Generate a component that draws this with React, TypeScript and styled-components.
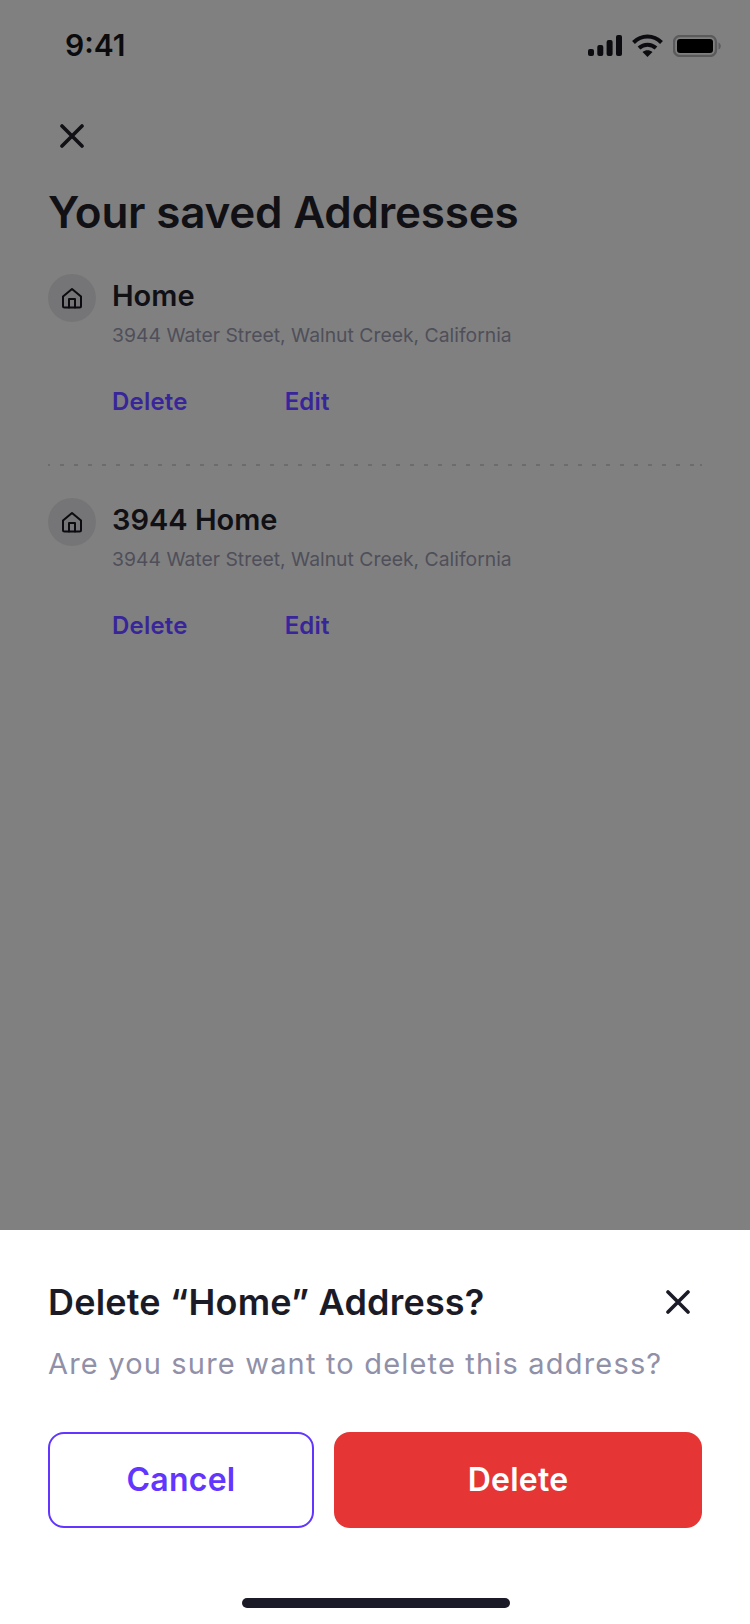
import React from "react";
import styled, { createGlobalStyle } from "styled-components";

const Global = createGlobalStyle`
  html, body { margin: 0; padding: 0; }
  body { font-family: "Inter", "Noto Sans", sans-serif; }
  * { box-sizing: border-box; }
`;

const Screen = styled.div`
  width: 750px;
  height: 1624px;
  display: flex;
  flex-direction: column;
  background: #808080;
  overflow: hidden;
`;

const Backdrop = styled.div`
  flex: 1;
  display: flex;
  flex-direction: column;
  min-height: 0;
`;

const StatusBar = styled.div`
  height: 90px;
  padding: 26px 28px 0 65px;
  display: flex;
  justify-content: space-between;
  align-items: flex-start;
`;

const Time = styled.span`
  font-family: "Inter", sans-serif;
  font-size: 30px;
  line-height: 38px;
  font-weight: 600;
  color: #0b0b0e;
`;

const StatusIcons = styled.div`
  display: flex;
  align-items: center;
  gap: 10px;
  margin-top: 8px;
`;

const Content = styled.div`
  padding: 22px 48px 0;
  display: flex;
  flex-direction: column;
`;

const CloseButton = styled.div`
  width: 48px;
  height: 48px;
  display: flex;
  align-items: center;
  justify-content: center;
  color: #101015;
`;

const Title = styled.h1`
  margin: 24px 0 0;
  font-size: 44px;
  line-height: 56px;
  font-weight: 600;
  letter-spacing: -0.22px;
  color: #101015;
`;

const AddressList = styled.div`
  margin-top: 34px;
  display: flex;
  flex-direction: column;
`;

const AddressItem = styled.div`
  display: grid;
  grid-template-columns: 48px 1fr;
  column-gap: 16px;
`;

const Divider = styled.div`
  height: 2px;
  margin: 47px 0 32px;
  background: repeating-linear-gradient(90deg, #6c6c6c 0 4px, transparent 4px 14px);
  background-position: -2px 0;
`;

const IconCircle = styled.div`
  width: 48px;
  height: 48px;
  border-radius: 50%;
  background: #757577;
  display: flex;
  align-items: center;
  justify-content: center;
  color: #0b0b10;
`;

const AddressName = styled.div`
  margin-top: 2px;
  font-size: 29px;
  line-height: 40px;
  font-weight: 600;
  color: #101015;
`;

const AddressLine = styled.div`
  margin-top: 6px;
  font-size: 19.35px;
  line-height: 26px;
  color: #4f4f5a;
`;

const Actions = styled.div`
  margin-top: 39px;
  display: flex;
  gap: 97px;
`;

const ActionLink = styled.span`
  font-size: 24px;
  line-height: 30px;
  font-weight: 600;
  letter-spacing: 0.2px;
  color: #38259a;
`;

const Sheet = styled.div`
  height: 394px;
  background: #ffffff;
  padding: 48px 48px 0;
  display: flex;
  flex-direction: column;
  position: relative;
`;

const SheetHead = styled.div`
  display: flex;
  justify-content: space-between;
  align-items: center;
`;

const SheetTitle = styled.h2`
  margin: 0;
  font-size: 36px;
  line-height: 44px;
  font-weight: 600;
  letter-spacing: 0.2px;
  color: #1b1b27;
`;

const SheetClose = styled.div`
  width: 48px;
  height: 48px;
  display: flex;
  align-items: center;
  justify-content: center;
  color: #1b1b27;
`;

const SheetText = styled.p`
  margin: 19px 0 0;
  font-size: 29px;
  line-height: 38px;
  font-weight: 400;
  letter-spacing: 1.18px;
  color: #9090a8;
`;

const ButtonRow = styled.div`
  margin-top: 49px;
  display: grid;
  grid-template-columns: 266px 368px;
  column-gap: 20px;
`;

const Button = styled.div<{ $danger?: boolean }>`
  height: 96px;
  padding-bottom: 2px;
  border-radius: 16px;
  display: flex;
  align-items: center;
  justify-content: center;
  font-size: 32px;
  font-weight: 600;
  letter-spacing: 0.25px;
  background: ${(p) => (p.$danger ? "#e53535" : "#ffffff")};
  color: ${(p) => (p.$danger ? "#ffffff" : "#6236ff")};
  border: ${(p) => (p.$danger ? "none" : "2px solid #6236ff")};
`;

const HomeIndicator = styled.div`
  position: absolute;
  left: 242px;
  bottom: 16px;
  width: 268px;
  height: 10px;
  border-radius: 5px;
  background: #1b1b27;
`;

const X = () => (
  <svg width="24" height="24" viewBox="0 0 24 24" fill="none" stroke="currentColor" strokeWidth="3.6" strokeLinecap="round">
    <path d="M2 2 L22 22 M22 2 L2 22" />
  </svg>
);

const HomeIcon = () => (
  <svg width="24" height="24" viewBox="0 0 24 24" fill="none" stroke="currentColor" strokeWidth="2" strokeLinejoin="round" strokeLinecap="round">
    <path d="M3 10.5 L12 3 L21 10.5 V20 A1.5 1.5 0 0 1 19.5 21.5 H4.5 A1.5 1.5 0 0 1 3 20 Z" />
    <path d="M9 21.5 V13 H15 V21.5" />
  </svg>
);

const Signal = () => (
  <svg width="34" height="21" viewBox="0 0 34 21" fill="#0b0b10">
    <rect x="0" y="14" width="6" height="7" rx="2" />
    <rect x="9.3" y="10" width="6" height="11" rx="2" />
    <rect x="18.6" y="5" width="6" height="16" rx="2" />
    <rect x="28" y="0" width="6" height="21" rx="2" />
  </svg>
);

const Wifi = () => (
  <svg width="31" height="23" viewBox="0 0 31 23" fill="none" stroke="#0b0b10" strokeWidth="4">
    <path d="M1.5 8.5 C9.5 0.5 21.5 0.5 29.5 8.5" />
    <path d="M7 14 C12 9.5 19 9.5 24 14" />
    <path d="M10.5 18 C13.5 15.5 17.5 15.5 20.5 18 L15.5 23 Z" fill="#0b0b10" stroke="none" />
  </svg>
);

const Battery = () => (
  <svg width="49" height="22" viewBox="0 0 49 22" fill="none">
    <rect x="1" y="1" width="42" height="20" rx="6" stroke="#5b5b5e" strokeWidth="2.4" />
    <rect x="4" y="4" width="36" height="14" rx="3" fill="#000" />
    <path d="M45.5 7.5 C48.5 8.5 48.5 13.5 45.5 14.5 Z" fill="#5b5b5e" />
  </svg>
);

const addresses = [
  { name: "Home", line: "3944 Water Street, Walnut Creek, California" },
  { name: "3944 Home", line: "3944 Water Street, Walnut Creek, California" },
];

export default function App() {
  return (
    <Screen>
      <Global />
      <Backdrop>
        <StatusBar>
          <Time>9:41</Time>
          <StatusIcons>
            <Signal />
            <Wifi />
            <Battery />
          </StatusIcons>
        </StatusBar>
        <Content>
          <CloseButton><X /></CloseButton>
          <Title>Your saved Addresses</Title>
          <AddressList>
            {addresses.map((a, i) => (
              <React.Fragment key={a.name}>
                {i > 0 && <Divider />}
                <AddressItem>
                  <IconCircle><HomeIcon /></IconCircle>
                  <div>
                    <AddressName>{a.name}</AddressName>
                    <AddressLine>{a.line}</AddressLine>
                    <Actions>
                      <ActionLink>Delete</ActionLink>
                      <ActionLink>Edit</ActionLink>
                    </Actions>
                  </div>
                </AddressItem>
              </React.Fragment>
            ))}
          </AddressList>
        </Content>
      </Backdrop>
      <Sheet>
        <SheetHead>
          <SheetTitle>Delete “Home” Address?</SheetTitle>
          <SheetClose><X /></SheetClose>
        </SheetHead>
        <SheetText>Are you sure want to delete this address?</SheetText>
        <ButtonRow>
          <Button>Cancel</Button>
          <Button $danger>Delete</Button>
        </ButtonRow>
        <HomeIndicator />
      </Sheet>
    </Screen>
  );
}
